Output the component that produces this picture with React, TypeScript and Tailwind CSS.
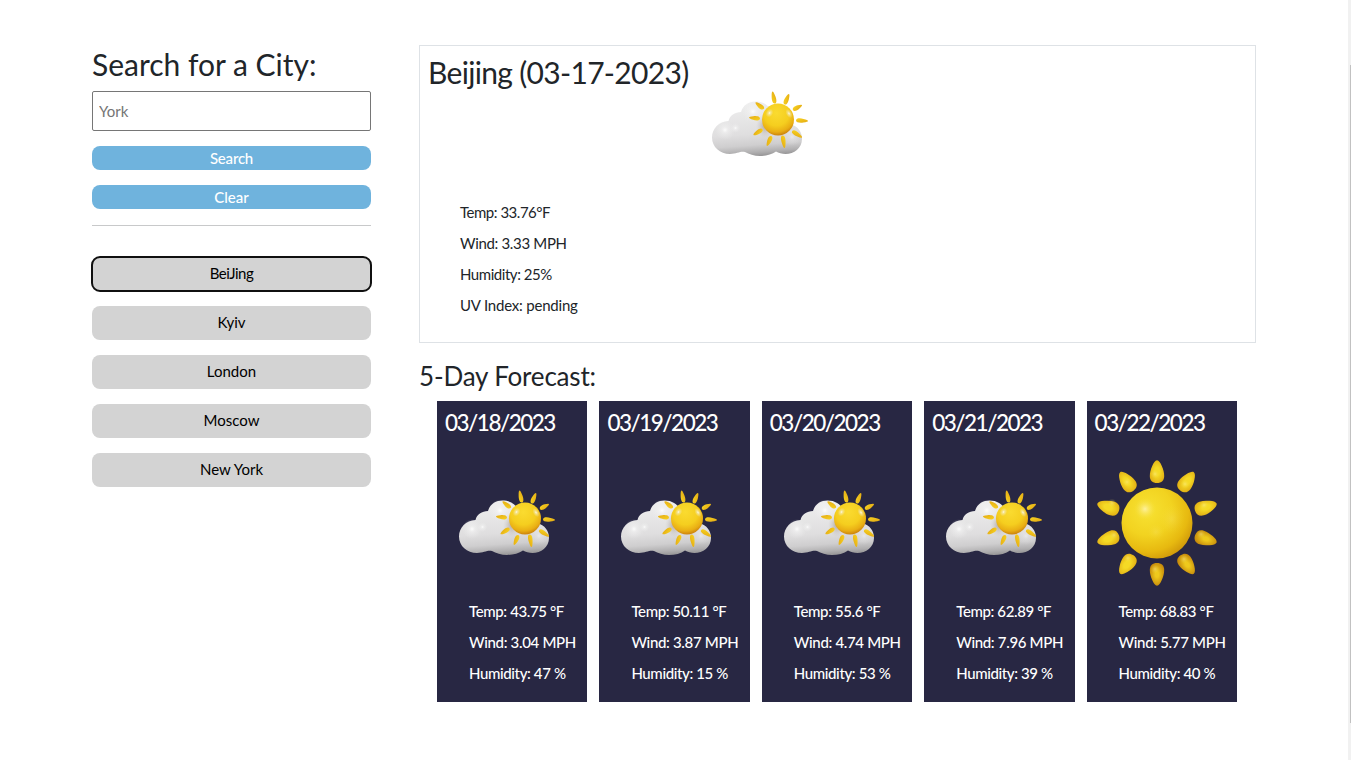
const rays = [
  [75, 18, 72.5, 6.5],
  [85, 19, 89, 9],
  [93.5, 25, 102, 20],
  [96.5, 35.5, 108, 36],
  [92.5, 46.5, 102, 52.5],
  [82.5, 51, 84.5, 63],
  [71, 51.5, 67, 61],
  [62, 44.5, 53.5, 50],
  [59.5, 33.5, 49, 32.5],
  [63.5, 23.5, 55.5, 17.5],
];

function SunRay({ x1, y1, x2, y2 }: { x1: number; y1: number; x2: number; y2: number }) {
  const length = Math.hypot(x2 - x1, y2 - y1);
  const angle = (Math.atan2(y2 - y1, x2 - x1) * 180) / Math.PI;
  return (
    <path
      d={`M-0.5 0C-0.5 -2.5 3.500 -2.7 ${length * 0.6} -1.9Q${length} -1 ${length} 0Q${length} 0.9 ${length * 0.6} 1.7C3.500 2.4 -0.5 2 -0.5 0Z`}
      fill="url(#ray)"
      transform={`translate(${x1} ${y1}) rotate(${angle})`}
    />
  );
}

function PartlyCloudy() {
  return (
    <svg width="120" height="80" viewBox="0 0 120 80" className="block shrink-0">
      <defs>
        <linearGradient id="cloud" gradientUnits="userSpaceOnUse" x1="52" y1="16" x2="56" y2="71">
          <stop offset="0" stopColor="#efefef" />
          <stop offset="0.6" stopColor="#dfdedf" />
          <stop offset="0.8" stopColor="#cfcecf" />
          <stop offset="0.93" stopColor="#b0afb0" />
          <stop offset="1" stopColor="#989798" />
        </linearGradient>
        <radialGradient id="lobe">
          <stop offset="0" stopColor="#fff" stopOpacity="0.9" />
          <stop offset="0.3" stopColor="#f6f6f6" stopOpacity="0.5" />
          <stop offset="1" stopColor="#eee" stopOpacity="0" />
        </radialGradient>
        <radialGradient id="shade">
          <stop offset="0" stopColor="#8d7766" stopOpacity="0.7" />
          <stop offset="1" stopColor="#bbb" stopOpacity="0" />
        </radialGradient>
        <radialGradient id="smallSun" cx="0.45" cy="0.3" r="0.72">
          <stop offset="0" stopColor="#fadb30" />
          <stop offset="0.55" stopColor="#f5ce1f" />
          <stop offset="0.82" stopColor="#e9ae14" />
          <stop offset="1" stopColor="#c67a0b" />
        </radialGradient>
        <linearGradient id="ray" x1="0" y1="0" x2="1" y2="1">
          <stop offset="0" stopColor="#f8d322" />
          <stop offset="1" stopColor="#e3a912" />
        </linearGradient>
      </defs>
      <path
        d="M28.500 36C29.500 30 35 27.500 41 27C43 20 49 16.500 55.500 16.500C64 16.500 70 21 73 29C80 31 85 34 90 39C98 41 102 47 102 54C102 63 94 69 85.500 69C82 69 78.500 68 76 66.500C72 69.500 66 71 60 71C54 71 49 69 45 67C40 66 37 69 30 69C20 69 12 62 12 52.500C12 43.500 19 36.500 28.500 36Z"
        fill="url(#cloud)"
      />
      <circle cx="25" cy="45" r="10" fill="url(#lobe)" />
      <circle cx="35.500" cy="43" r="5" fill="url(#lobe)" />
      <circle cx="53" cy="26.500" r="11" fill="url(#lobe)" />
      <circle cx="92" cy="52" r="9" fill="url(#lobe)" opacity="0.5" />
      <ellipse cx="65" cy="41" rx="9" ry="12" fill="url(#shade)" opacity="0.8" />
      {rays.map(([x1, y1, x2, y2]) => (
        <SunRay key={`${x2}-${y2}`} x1={x1} y1={y1} x2={x2} y2={y2} />
      ))}
      <circle cx="78" cy="34.500" r="16" fill="url(#smallSun)" />
      <ellipse cx="69.500" cy="28" rx="3.500" ry="4.500" fill="url(#lobe)" transform="rotate(30 69.500 28)" />
      <ellipse cx="89" cy="28.500" rx="3" ry="5" fill="url(#lobe)" transform="rotate(-30 89 28.500)" />
    </svg>
  );
}

function Sunny() {
  return (
    <svg width="150" height="150" viewBox="0 0 150 150" className="block shrink-0">
      <defs>
        <radialGradient id="bigSun" cx="0.36" cy="0.32" r="0.78">
          <stop offset="0" stopColor="#f7e233" />
          <stop offset="0.45" stopColor="#f2d320" />
          <stop offset="0.75" stopColor="#e7b910" />
          <stop offset="1" stopColor="#c88e08" />
        </radialGradient>
        <radialGradient id="glow">
          <stop offset="0" stopColor="#fff3b0" stopOpacity="0.85" />
          <stop offset="1" stopColor="#f6df3c" stopOpacity="0" />
        </radialGradient>
        <radialGradient id="petal" cx="0.5" cy="0.5" r="0.6">
          <stop offset="0.3" stopColor="#f5da25" />
          <stop offset="1" stopColor="#dfaa12" />
        </radialGradient>
        <radialGradient id="petalShaded" cx="0.5" cy="0.5" r="0.6">
          <stop offset="0.2" stopColor="#efc91c" />
          <stop offset="1" stopColor="#bf8009" />
        </radialGradient>
      </defs>
      {[0, 36, 72, 108, 144, 180, 216, 252, 288, 324].map((angle) => (
        <g key={angle} transform={`rotate(${angle} 70 78)`}>
          <path
            d="M70 15.300C71.800 15.300 73.500 18 74.800 21C76.300 24.500 77.200 27.500 77.200 31C77.200 35.500 74.500 38 70 38C65.500 38 62.800 35.500 62.800 31C62.800 27.500 63.700 24.500 65.200 21C66.500 18 68.200 15.300 70 15.300Z"
            fill={angle > 80 && angle < 190 ? "url(#petalShaded)" : "url(#petal)"}
          />
        </g>
      ))}
      {[
        [68, 29],
        [98, 39],
        [40, 37],
        [25, 58],
        [117, 60],
        [27, 90],
        [41, 113],
        [68, 124],
        [97, 114],
        [114, 89],
      ].map(([x, y]) => (
        <circle key={`${x}-${y}`} cx={x} cy={y} r="4.500" fill="url(#glow)" opacity="0.5" />
      ))}
      <circle cx="70" cy="78" r="35.500" fill="url(#bigSun)" />
      <circle cx="58" cy="64" r="11" fill="url(#glow)" />
      <ellipse cx="85" cy="74" rx="13" ry="16" fill="url(#glow)" opacity="0.2" />
      <circle cx="69" cy="87" r="9" fill="url(#glow)" opacity="0.2" />
    </svg>
  );
}

const cities = ["BeiJing", "Kyiv", "London", "Moscow", "New York"];

const forecast = [
  { date: "03/18/2023", sunny: false, temp: "43.75", wind: "3.04", humidity: "47" },
  { date: "03/19/2023", sunny: false, temp: "50.11", wind: "3.87", humidity: "15" },
  { date: "03/20/2023", sunny: false, temp: "55.6", wind: "4.74", humidity: "53" },
  { date: "03/21/2023", sunny: false, temp: "62.89", wind: "7.96", humidity: "39" },
  { date: "03/22/2023", sunny: true, temp: "68.83", wind: "5.77", humidity: "40" },
];

export default function App() {
  return (
    <div className="flex h-[760px] w-full overflow-hidden bg-white font-['Lato',sans-serif] text-[15px] text-[#212529]">
      <aside className="ml-[92px] mt-[45px] w-[279px] shrink-0">
        <h1 className="h-[46px] whitespace-nowrap text-[30px] leading-[38px]">Search for a City:</h1>
        <input
          placeholder="York"
          className="block h-10 w-full rounded-[2px] border border-[#767676] px-1.5 text-[15px] placeholder:text-[#757575]"
        />
        <button className="mt-[15px] block h-6 w-full rounded-lg bg-[#6fb3dd] pb-px text-[15px] font-medium leading-[22px] tracking-[-0.2px] text-white">
          Search
        </button>
        <button className="mt-[15px] block h-6 w-full rounded-lg bg-[#6fb3dd] pb-px text-[15px] font-medium leading-[22px] text-white">
          Clear
        </button>
        <hr className="mt-4 border-[#c8c9ca]" />
        <div className="mt-[31px] flex flex-col gap-[15px]">
          {cities.map((city, i) => (
            <button
              key={city}
              className={
                i === 0
                  ? "h-[34px] w-full rounded-lg bg-[#d3d3d3] pb-0.5 tracking-[-0.5px] text-black outline-2 outline-[#101010] -outline-offset-1"
                  : "h-[34px] w-full rounded-lg bg-[#d3d3d3] pb-0.5 text-black"
              }
            >
              {city}
            </button>
          ))}
        </div>
      </aside>
      <main className="ml-12 mt-[45px] w-[837px] shrink-0">
        <section className="h-[298px] border border-[#dee2e6] pl-2 pt-2">
          <h2 className="h-8 whitespace-nowrap text-[30px] leading-[37px] tracking-[-0.68px]">Beijing (03-17-2023)</h2>
          <div className="ml-[272px] -mt-px">
            <PartlyCloudy />
          </div>
          <div className="ml-8 mt-8 leading-[31px]">
            <p className="tracking-[-0.48px]">Temp: 33.76°F</p>
            <p className="tracking-[-0.33px]">Wind: 3.33 MPH</p>
            <p className="tracking-[-0.45px]">Humidity: 25%</p>
            <p className="tracking-[-0.2px]">UV Index: pending</p>
          </div>
        </section>
        <h3 className="mt-3 h-[46px] text-[26px] leading-[42px] tracking-[-0.18px]">5-Day Forecast:</h3>
        <div className="ml-[18px] grid w-[800px] grid-cols-5 gap-3">
          {forecast.map((day) => (
            <article key={day.date} className="h-[301px] overflow-hidden bg-[#282743] font-medium text-white">
              <h4 className="pl-2 pt-1.5 text-[22.5px] leading-8 tracking-[-1.5px]">{day.date}</h4>
              <div className="h-[157px]">
                {day.sunny ? (
                  <div className="pt-1.5">
                    <Sunny />
                  </div>
                ) : (
                  <div className="ml-[10px] pt-[45px]">
                    <PartlyCloudy />
                  </div>
                )}
              </div>
              <div className="whitespace-nowrap pl-8 leading-[31px]">
                <p className="tracking-[-0.38px]">Temp: {day.temp} °F</p>
                <p className="tracking-[-0.33px]">Wind: {day.wind} MPH</p>
                <p className="tracking-[-0.38px]">Humidity: {day.humidity} %</p>
              </div>
            </article>
          ))}
        </div>
      </main>
      <div className="ml-auto flex h-full w-[3px] justify-end bg-[#f1f1f1] pt-[65px]">
        <div className="h-[658px] w-px bg-[#c1c1c1]" />
      </div>
    </div>
  );
}
